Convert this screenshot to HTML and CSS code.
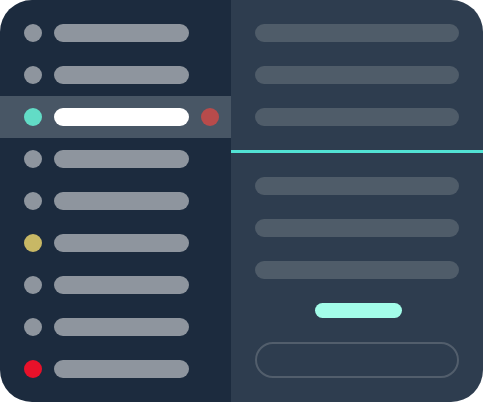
FILE: index.html
```html
<!DOCTYPE html>
<html>
<head>
<meta charset="utf-8">
<link rel="stylesheet" href="styles.css">
</head>
<body>
<div class="app">
  <div class="sidebar">
    <div class="row"><span class="dot"></span><span class="bar"></span></div>
    <div class="row"><span class="dot"></span><span class="bar"></span></div>
    <div class="row active"><span class="dot teal"></span><span class="bar white"></span><span class="dot red"></span></div>
    <div class="row"><span class="dot"></span><span class="bar"></span></div>
    <div class="row"><span class="dot"></span><span class="bar"></span></div>
    <div class="row"><span class="dot yellow"></span><span class="bar"></span></div>
    <div class="row"><span class="dot"></span><span class="bar"></span></div>
    <div class="row"><span class="dot"></span><span class="bar"></span></div>
    <div class="row"><span class="dot alert"></span><span class="bar"></span></div>
  </div>
  <div class="main">
    <div class="group">
      <div class="line"><span class="pill"></span></div>
      <div class="line"><span class="pill"></span></div>
      <div class="line"><span class="pill"></span></div>
    </div>
    <div class="divider"></div>
    <div class="group">
      <div class="line"><span class="pill"></span></div>
      <div class="line"><span class="pill"></span></div>
      <div class="line"><span class="pill"></span></div>
    </div>
    <div class="button"></div>
    <div class="input"></div>
  </div>
</div>
</body>
</html>
```

FILE: styles.css
```css
html, body {
  margin: 0;
  padding: 0;
  background: #ffffff;
}
.app {
  width: 483px;
  height: 402px;
  display: flex;
  border-radius: 32px;
  overflow: hidden;
}
.sidebar {
  width: 231px;
  background: #1c2b3e;
  padding: 12px 0;
  box-sizing: border-box;
  display: flex;
  flex-direction: column;
}
.row {
  height: 42px;
  display: flex;
  align-items: center;
  padding-left: 24px;
}
.row.active {
  background: #485665;
}
.dot {
  width: 18px;
  height: 18px;
  border-radius: 50%;
  background: #8e959e;
  flex: none;
}
.dot.teal { background: #62dcc6; }
.dot.red { background: #b84b4b; margin-left: 12px; }
.dot.yellow { background: #c8b865; }
.dot.alert { background: #e8112a; }
.bar {
  width: 135px;
  height: 18px;
  border-radius: 9px;
  background: #8e959e;
  margin-left: 12px;
  flex: none;
}
.bar.white { background: #ffffff; }
.main {
  flex: 1;
  background: #2e3d4f;
  padding-top: 12px;
  display: flex;
  flex-direction: column;
}
.line {
  height: 42px;
  display: flex;
  align-items: center;
  padding-left: 24px;
}
.pill {
  width: 204px;
  height: 18px;
  border-radius: 9px;
  background: #4f5c69;
}
.divider {
  height: 3px;
  background: #52e2d4;
  margin: 12px 0;
}
.button {
  align-self: flex-start;
  margin: 12px 0 0 84px;
  width: 87px;
  height: 15px;
  border-radius: 8px;
  background: #a3fde9;
}
.input {
  margin: 24px 0 0 24px;
  width: 204px;
  height: 36px;
  box-sizing: border-box;
  border: 2px solid #525e6c;
  border-radius: 18px;
}
```
